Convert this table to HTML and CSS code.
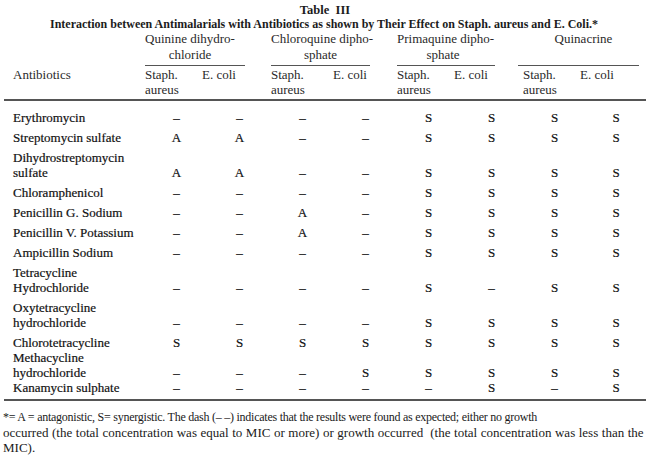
FILE: index.html
```html
<!DOCTYPE html>
<html>
<head>
<meta charset="utf-8">
<link rel="stylesheet" href="styles.css">
</head>
<body>
<div class="page">
  <div class="title">Table&nbsp; III</div>
  <div class="subtitle">Interaction between Antimalarials with Antibiotics as shown by Their Effect on Staph. aureus and E. Coli.*</div>

  <div class="table">
    <div class="grid groups">
      <div></div>
      <div class="group"><div class="glabel g-qui">Quinine dihydro-<br>chloride</div></div>
      <div class="group"><div class="glabel g-chl">Chloroquine dipho-<br>sphate</div></div>
      <div class="group"><div class="glabel g-pri">Primaquine dipho-<br>sphate</div></div>
      <div class="group"><div class="glabel g-qna">Quinacrine<br>&nbsp;</div></div>
    </div>
    <div class="grid subs">
      <div class="lbl">Antibiotics</div>
      <div class="staph">Staph.<br>aureus</div><div class="ecoli">E. coli</div>
      <div class="staph">Staph.<br>aureus</div><div class="ecoli ecoli-near">E. coli</div>
      <div class="staph">Staph.<br>aureus</div><div class="ecoli">E. coli</div>
      <div class="staph">Staph.<br>aureus</div><div class="ecoli">E. coli</div>
    </div>

    <div class="body">
      <div class="grid row"><div class="lbl">Erythromycin</div><div class="v">–</div><div class="v">–</div><div class="v">–</div><div class="v">–</div><div class="v">S</div><div class="v">S</div><div class="v">S</div><div class="v">S</div></div>
      <div class="grid row"><div class="lbl">Streptomycin sulfate</div><div class="v">A</div><div class="v">A</div><div class="v">–</div><div class="v">–</div><div class="v">S</div><div class="v">S</div><div class="v">S</div><div class="v">S</div></div>
      <div class="grid row"><div class="lbl">Dihydrostreptomycin<br>sulfate</div><div class="v">A</div><div class="v">A</div><div class="v">–</div><div class="v">–</div><div class="v">S</div><div class="v">S</div><div class="v">S</div><div class="v">S</div></div>
      <div class="grid row"><div class="lbl">Chloramphenicol</div><div class="v">–</div><div class="v">–</div><div class="v">–</div><div class="v">–</div><div class="v">S</div><div class="v">S</div><div class="v">S</div><div class="v">S</div></div>
      <div class="grid row"><div class="lbl">Penicillin G. Sodium</div><div class="v">–</div><div class="v">–</div><div class="v">A</div><div class="v">–</div><div class="v">S</div><div class="v">S</div><div class="v">S</div><div class="v">S</div></div>
      <div class="grid row"><div class="lbl">Penicillin V. Potassium</div><div class="v">–</div><div class="v">–</div><div class="v">A</div><div class="v">–</div><div class="v">S</div><div class="v">S</div><div class="v">S</div><div class="v">S</div></div>
      <div class="grid row"><div class="lbl">Ampicillin Sodium</div><div class="v">–</div><div class="v">–</div><div class="v">–</div><div class="v">–</div><div class="v">S</div><div class="v">S</div><div class="v">S</div><div class="v">S</div></div>
      <div class="grid row"><div class="lbl">Tetracycline<br>Hydrochloride</div><div class="v">–</div><div class="v">–</div><div class="v">–</div><div class="v">–</div><div class="v">S</div><div class="v">–</div><div class="v">S</div><div class="v">S</div></div>
      <div class="grid row"><div class="lbl">Oxytetracycline<br>hydrochloride</div><div class="v">–</div><div class="v">–</div><div class="v">–</div><div class="v">–</div><div class="v">S</div><div class="v">S</div><div class="v">S</div><div class="v">S</div></div>
      <div class="grid row row-chloro"><div class="lbl">Chlorotetracycline</div><div class="v">S</div><div class="v">S</div><div class="v">S</div><div class="v">S</div><div class="v">S</div><div class="v">S</div><div class="v">S</div><div class="v">S</div></div>
      <div class="grid row row-tight"><div class="lbl">Methacycline<br>hydrochloride</div><div class="v">–</div><div class="v">–</div><div class="v">–</div><div class="v">S</div><div class="v">S</div><div class="v">S</div><div class="v">S</div><div class="v">S</div></div>
      <div class="grid row row-last"><div class="lbl">Kanamycin sulphate</div><div class="v">–</div><div class="v">–</div><div class="v">–</div><div class="v">–</div><div class="v">–</div><div class="v">S</div><div class="v">–</div><div class="v">S</div></div>
    </div>
  </div>

  <div class="note">
    <div class="note-line note-first">*= A = antagonistic, S= synergistic. The dash (– –) indicates that the results were found as expected; either no growth</div>
    <div class="note-line">occurred (the total concentration was equal to MIC or more) or growth occurred&nbsp; (the total concentration was less than the</div>
    <div class="note-line">MIC).</div>
  </div>
</div>
</body>
</html>
```

FILE: styles.css
```css
html, body {
  margin: 0;
  padding: 0;
  background: #ffffff;
}

body {
  font-family: "Liberation Serif", "Times New Roman", serif;
  color: #1c1c1c;
}

.page {
  width: 650px;
  height: 459px;
  overflow: hidden;
  padding-top: 3px;
  box-sizing: border-box;
}

.title {
  font-weight: bold;
  font-size: 12.5px;
  line-height: 14px;
  text-align: center;
}

.subtitle {
  font-weight: bold;
  font-size: 12px;
  line-height: 14px;
  text-align: center;
  padding-right: 2px;
}

.table {
  margin: 0 4px;
}

.grid {
  display: grid;
  grid-template-columns: 132px repeat(7, 63px) 60px;
  padding-left: 9px;
  font-size: 13px;
}

.groups {
  line-height: 16px;
  color: #2a2a2a;
}

.group {
  grid-column: span 2;
}

.glabel {
  border-bottom: 1px solid #555;
  padding-bottom: 2px;
  text-align: center;
  white-space: nowrap;
  box-sizing: border-box;
}

.g-qui { width: 100px; padding-right: 10px; }
.g-chl { width: 99px; }
.g-pri { width: 98px; padding-right: 6px; }
.g-qna { width: 121px; margin-left: -5px; padding-left: 10px; }

.subs {
  line-height: 15px;
  padding-top: 1px;
  padding-bottom: 2px;
  align-items: start;
  border-bottom: 2px solid #555;
  color: #2a2a2a;
}

.staph {
  justify-self: start;
}

.ecoli {
  justify-self: start;
  margin-left: -6px;
}

.ecoli-near {
  margin-left: -1px;
}

.body {
  padding-top: 6px;
  padding-bottom: 4px;
  border-bottom: 2px solid #555;
}

.row {
  line-height: 15px;
  padding: 2.5px 0 2.5px 9px;
  align-items: end;
}

.row-chloro {
  padding-bottom: 0;
}

.row-tight,
.row-last {
  padding-top: 0;
  padding-bottom: 0;
}

.lbl,
.v {
  color: #111;
  -webkit-text-stroke: 0.2px #111;
}

.subs .lbl {
  -webkit-text-stroke: 0;
  color: #2a2a2a;
}

.v {
  text-align: center;
}

.note {
  padding: 9px 0 0 3px;
  line-height: 15px;
  white-space: nowrap;
  color: #1a1a1a;
}

.note-line {
  font-size: 13px;
  word-spacing: 0.3px;
}

.note-first {
  font-size: 12px;
  letter-spacing: -0.25px;
  word-spacing: 0;
}
```
